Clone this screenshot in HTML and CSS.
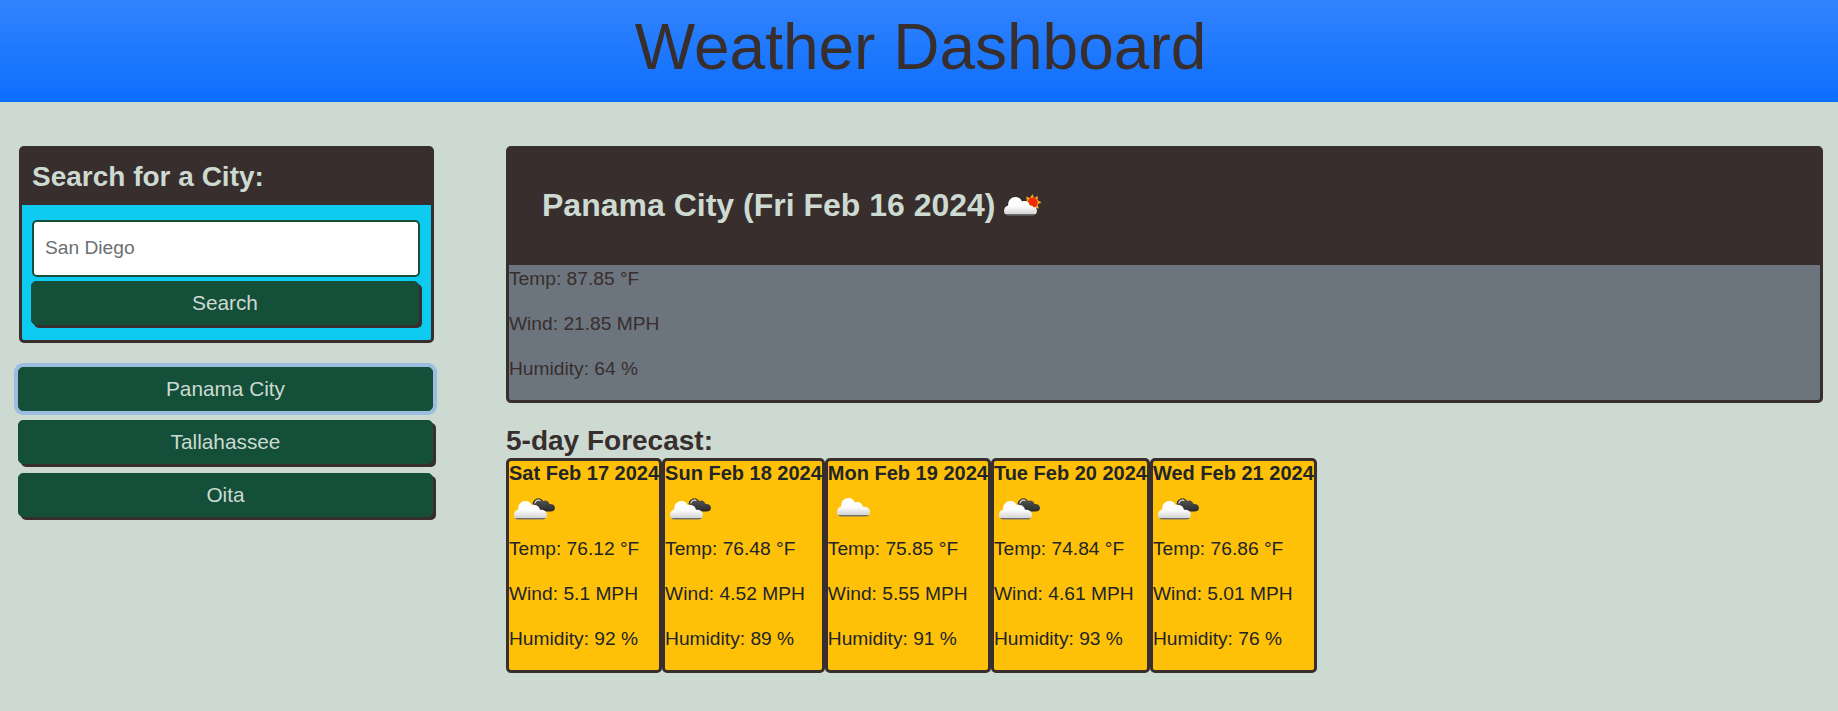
FILE: index.html
```html
<!DOCTYPE html>
<html lang="en">
<head>
<meta charset="utf-8">
<title>Weather Dashboard</title>
<link rel="stylesheet" href="styles.css">
</head>
<body>
<svg class="defs" width="0" height="0" aria-hidden="true">
  <defs>
    <linearGradient id="white" x1="0" y1="0" x2="0" y2="1">
      <stop offset="0" stop-color="#fff"/><stop offset=".5" stop-color="#fcfcfc"/><stop offset=".9" stop-color="#d6d6d6"/><stop offset=".92" stop-color="#666"/><stop offset="1" stop-color="#777"/>
    </linearGradient>
    <linearGradient id="dark" x1="0" y1="0" x2="0" y2="1">
      <stop offset="0" stop-color="#555"/><stop offset="1" stop-color="#2a2a2a"/>
    </linearGradient>
    <path id="cloud" d="M4.500 20.500C1.800 20.500 0 18.800 0 16C0 13 1.700 11 4.200 10.500C3.800 5.500 7 2 11.500 2C14.500 2 17 3.800 18 6.500C21.500 5 25.300 7 26 10.700C29.800 10.500 33 12.300 33 15.800C33 18.800 31 20.500 28.500 20.500Z"/>
    <symbol id="broken" viewBox="0 0 50 50">
      <path d="M24 19C25 14.500 30 12.500 34 16C37 14.500 40 16.500 40.500 19C44 18.800 46 20.500 46 23C46 25.500 44 26.500 41.500 26.500H31Z" fill="url(#dark)"/>
      <path d="M24 19A5.500 5.500 0 0 1 33.500 15.500" fill="none" stroke="#222" stroke-width="1"/>
      <path d="M25.800 18.500A4 4 0 0 1 31.500 15.500" fill="none" stroke="#ddd" stroke-width="1.200"/>
      <use href="#cloud" x="5" y="14" fill="url(#white)"/>
    </symbol>
    <symbol id="plain" viewBox="0 0 50 50">
      <use href="#cloud" x="9" y="11" fill="url(#white)"/>
    </symbol>
    <symbol id="sunny" viewBox="0 0 50 50">
      <path d="M34.500 13L36 17L40 15L39.500 19L43.500 21.500L39.500 23.500L41 27.500L37 27L34.500 30.500L32 27L28 28L29 24L26 21.500L29 19.500L28 15.500L32 17Z" fill="#f5a720"/>
      <use href="#cloud" x="6" y="14" fill="url(#white)"/>
      <path d="M30 20.500A4.700 4.700 0 0 1 39.500 22C39.500 25 37.500 26.500 35.500 26.300C35.500 25 33.500 24 31.800 24C31.500 22.500 31 21.500 30 20.500Z" fill="#f32a08"/>
    </symbol>
  </defs>
</svg>

<header class="page-header"><h1>Weather Dashboard</h1></header>

<main class="layout">
  <aside class="sidebar">
    <section class="search-card">
      <h3 class="search-title">Search for a City:</h3>
      <form class="search-form">
        <input class="search-input" type="text" placeholder="San Diego">
        <button class="btn" type="button">Search</button>
      </form>
    </section>
    <div class="history">
      <button class="btn btn-active" type="button">Panama City</button>
      <button class="btn" type="button">Tallahassee</button>
      <button class="btn" type="button">Oita</button>
    </div>
  </aside>

  <div class="content">
    <section class="today">
      <div class="today-header">
        <h2>Panama City (Fri Feb 16 2024)</h2>
        <svg class="icon"><use href="#sunny"/></svg>
      </div>
      <p>Temp: 87.85 °F</p>
      <p>Wind: 21.85 MPH</p>
      <p>Humidity: 64 %</p>
    </section>
    <h3 class="forecast-title">5-day Forecast:</h3>
    <section class="forecast">
      <article class="day">
        <h5>Sat Feb 17 2024</h5>
        <svg class="icon"><use href="#broken"/></svg>
        <p>Temp: 76.12 °F</p><p>Wind: 5.1 MPH</p><p>Humidity: 92 %</p>
      </article>
      <article class="day">
        <h5>Sun Feb 18 2024</h5>
        <svg class="icon"><use href="#broken"/></svg>
        <p>Temp: 76.48 °F</p><p>Wind: 4.52 MPH</p><p>Humidity: 89 %</p>
      </article>
      <article class="day">
        <h5>Mon Feb 19 2024</h5>
        <svg class="icon"><use href="#plain"/></svg>
        <p>Temp: 75.85 °F</p><p>Wind: 5.55 MPH</p><p>Humidity: 91 %</p>
      </article>
      <article class="day">
        <h5>Tue Feb 20 2024</h5>
        <svg class="icon"><use href="#broken"/></svg>
        <p>Temp: 74.84 °F</p><p>Wind: 4.61 MPH</p><p>Humidity: 93 %</p>
      </article>
      <article class="day">
        <h5>Wed Feb 21 2024</h5>
        <svg class="icon"><use href="#broken"/></svg>
        <p>Temp: 76.86 °F</p><p>Wind: 5.01 MPH</p><p>Humidity: 76 %</p>
      </article>
    </section>
  </div>
</main>
</body>
</html>
```
FILE: styles.css
```css
* { box-sizing: border-box; }

body {
  margin: 0;
  min-height: 100vh;
  background: #cddad1;
  color: #382e2d;
  font: 19.2px/1.5 "Liberation Sans", Arial, sans-serif;
}

h1, h2, h3, h5, p { margin: 0; }

.defs { position: absolute; }

.page-header {
  height: 102px;
  padding: 9px 0 0 3px;
  text-align: center;
  background: #0d6efd linear-gradient(180deg, rgba(255, 255, 255, .15), rgba(255, 255, 255, 0));
}

.page-header h1 {
  font-size: 64px;
  font-weight: 400;
  line-height: 76.8px;
}

.layout {
  display: flex;
  gap: 72px;
  padding: 44px 15px 0 18px;
}

.sidebar { width: 416px; flex: none; }

.search-card {
  width: 415px;
  height: 197px;
  margin-left: 1px;
  border: 3px solid #382e2d;
  border-radius: 5px;
  background: #0dcaf0;
}

.search-title {
  height: 56px;
  padding-left: 10px;
  background: #382e2d;
  color: #cddad1;
  font-size: 28px;
  line-height: 56px;
}

.search-form {
  display: flex;
  flex-direction: column;
  gap: 4px;
  padding: 15px 12px 0 9px;
}

.search-input {
  width: 388px;
  height: 57px;
  margin-left: 1px;
  padding: 0 12px 2px 11px;
  border: 2px solid #144f3a;
  border-radius: 5px;
  background: #fff;
  font: inherit;
}

.search-input::placeholder { color: #6c6f72; opacity: 1; }

.btn {
  display: block;
  width: 100%;
  height: 44px;
  padding: 0;
  border: 1px solid #144f3a;
  border-radius: 5px;
  background: #144f3a;
  box-shadow: 3px 3px 0 #382e2d;
  color: #cddad1;
  font: 20.8px/30px "Liberation Sans", Arial, sans-serif;
}

.btn-active { box-shadow: 0 0 0 4px #9abde0; }

.history {
  display: flex;
  flex-direction: column;
  gap: 9px;
  width: 415px;
  margin-top: 24px;
}

.content { flex: 1; }

.today {
  height: 257px;
  border: 3px solid #382e2d;
  border-radius: 5px;
  background: #6c757d;
}

.today-header {
  display: flex;
  align-items: center;
  height: 116px;
  padding: 0 0 5px 33px;
  background: #382e2d;
  color: #cddad1;
}

.today-header h2 { font-size: 32px; line-height: 38px; }

.icon { display: block; width: 50px; height: 50px; }

.today-header .icon { margin: 3px 0 0 2px; }

p { margin-bottom: 16px; }

.forecast-title {
  height: 34px;
  margin-top: 21px;
  font-size: 28px;
  line-height: 33.6px;
}

.forecast { display: flex; }

.day {
  height: 215px;
  border: 3px solid #382e2d;
  border-radius: 5px;
  background: #ffc107;
  color: #212529;
}

.day h5 {
  font-size: 20px;
  line-height: 24px;
  white-space: nowrap;
}
```
